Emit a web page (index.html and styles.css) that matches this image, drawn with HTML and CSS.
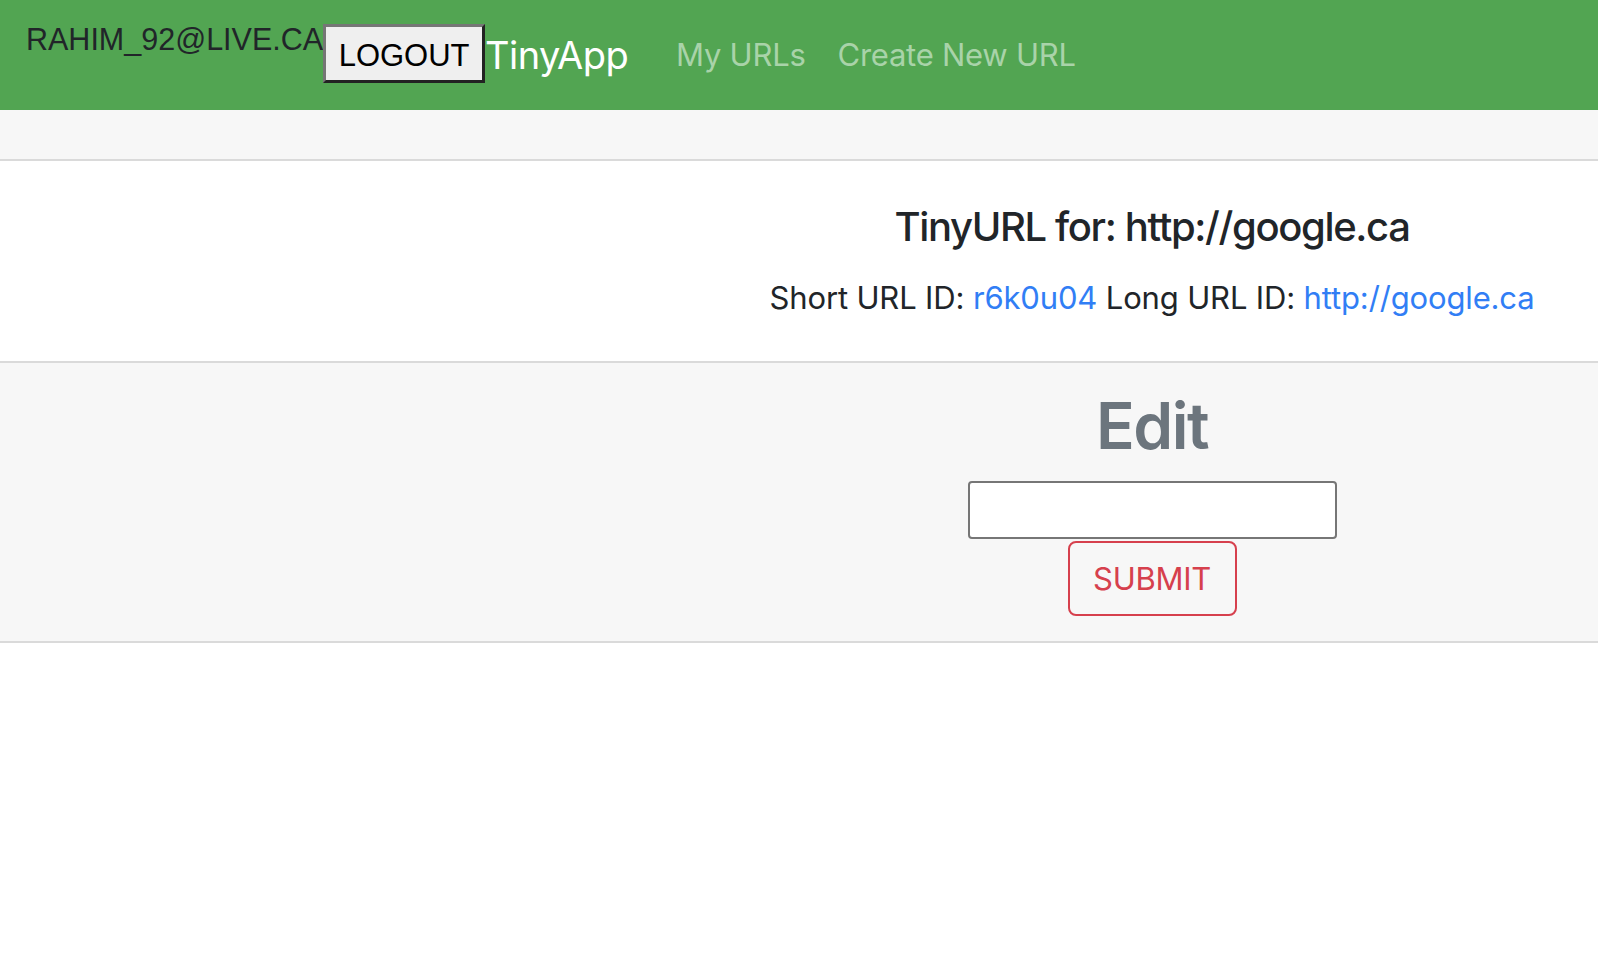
FILE: index.html
```html
<!DOCTYPE html>
<html lang="en">
<head>
<meta charset="utf-8">
<title>TinyApp</title>
<link rel="stylesheet" href="styles.css">
</head>
<body>
<header class="navbar">
  <span class="user">rahim_92@live.ca</span>
  <button class="logout" type="button">LOGOUT</button>
  <a class="brand" href="#">TinyApp</a>
  <nav class="nav">
    <a class="nav-link" href="#">My URLs</a>
    <a class="nav-link" href="#">Create New URL</a>
  </nav>
</header>
<main class="card">
  <div class="card-header"></div>
  <section class="card-body">
    <div class="col">
      <h5 class="card-title">TinyURL for: http://google.ca</h5>
      <p class="card-text">Short URL ID: <a href="#">r6k0u04</a> Long URL ID: <a href="#">http://google.ca</a></p>
    </div>
  </section>
  <section class="card-footer">
    <div class="col">
      <h2 class="edit-title">Edit</h2>
      <form class="edit-form">
        <input class="url-input" type="text">
        <button class="btn-submit" type="submit">SUBMIT</button>
      </form>
    </div>
  </section>
</main>
</body>
</html>
```
FILE: styles.css
```css
* { box-sizing: border-box; }
html, body { margin: 0; padding: 0; background: #fff; }
body { font-family: Inter, "Liberation Sans", sans-serif; color: #212529; }

.navbar {
  display: flex;
  align-items: flex-start;
  height: 110px;
  padding: 0 0 0 26px;
  background: #52a552;
}
.user {
  font-family: "Liberation Sans", Arial, sans-serif;
  font-size: 30.5px;
  line-height: 36px;
  margin-top: 21px;
  color: #212529;
  text-transform: uppercase;
  white-space: nowrap;
}
.logout {
  margin-top: 24px;
  width: 162px;
  height: 59px;
  padding: 4px 0 0;
  background: #efefef;
  border-style: solid;
  border-width: 3px;
  border-color: #767676 #222 #222 #767676;
  font-family: "Liberation Sans", Arial, sans-serif;
  font-size: 31px;
  color: #000;
}
.brand {
  margin-top: 31px;
  margin-right: 32px;
  font-size: 38px;
  line-height: 48px;
  color: #fff;
  text-decoration: none;
  letter-spacing: -0.6px;
}
.nav { display: flex; margin-top: 35px; }
.nav-link {
  padding: 0 16px;
  font-size: 31px;
  line-height: 40px;
  color: #a9d3a9;
  text-decoration: none;
  letter-spacing: -0.25px;
}

.card { display: flex; flex-direction: column; }
.card-header {
  height: 51px;
  background: #f7f7f7;
  border-bottom: 2px solid #dadada;
}
.card-body {
  padding: 42px 0 40px 706px;
  background: #fff;
  border-bottom: 2px solid #dadada;
}
.card-footer {
  padding: 24px 0 25px 706px;
  background: #f7f7f7;
  border-bottom: 2px solid #dadada;
}
.col { text-align: center; }

.card-title {
  margin: 0 0 24px;
  font-size: 40px;
  font-weight: 500;
  line-height: 48px;
  letter-spacing: -1.35px;
  color: #212529;
}
.card-text {
  margin: 0;
  font-size: 31px;
  line-height: 46px;
  letter-spacing: -0.15px;
  color: #212529;
}
.card-text a { color: #317ef5; text-decoration: none; }

.edit-title {
  margin: 0 0 17px;
  font-size: 64px;
  font-weight: 600;
  line-height: 77px;
  letter-spacing: -1.5px;
  color: #6c757d;
}
.edit-form {
  display: flex;
  flex-direction: column;
  align-items: center;
  gap: 2px;
}
.url-input {
  width: 369px;
  height: 58px;
  background: #fff;
  border: 2px solid #767676;
  border-radius: 4px;
}
.btn-submit {
  width: 169px;
  height: 75px;
  background: transparent;
  border: 2px solid #d6404d;
  border-radius: 8px;
  font-family: Inter, "Liberation Sans", sans-serif;
  font-size: 31px;
  letter-spacing: -0.3px;
  color: #d6404d;
}
```
